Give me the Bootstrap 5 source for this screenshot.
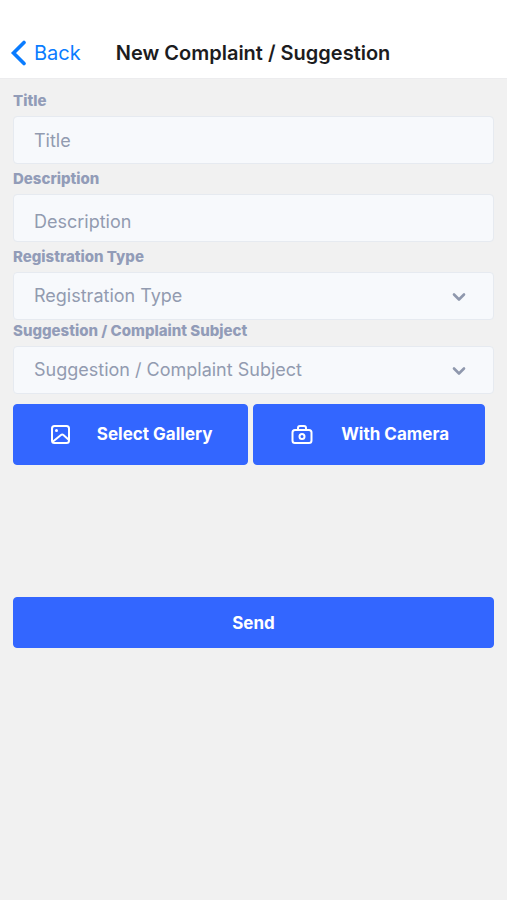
<!DOCTYPE html>
<html lang="en">
<head>
<meta charset="utf-8">
<meta name="viewport" content="width=device-width, initial-scale=1">
<title>New Complaint / Suggestion</title>
<link href="https://cdn.jsdelivr.net/npm/bootstrap@5.3.0/dist/css/bootstrap.min.css" rel="stylesheet">
<style>
  body { font-family: Inter, "Liberation Sans", sans-serif; background: #f1f1f1; color: #1c1c1e; }
  .top-bar { padding: 37px 10px 9px; border-bottom: 1px solid #ececee; gap: 35px; }
  .back-link { color: #0a7cff; font-size: 20px; line-height: 32px; gap: 8px; }
  .page-title { font-size: 20px; line-height: 32px; font-weight: 600; }
  .page-form { padding: 12px 13px; }
  .field-label { font-size: 15px; line-height: 20px; font-weight: 800; color: #929cb8; margin-bottom: 5px; }
  .field { margin-bottom: 5px; }
  .field-tight { margin-bottom: 1px; }
  .field-last { margin-bottom: 10px; }
  .field-box, .field-box:focus { height: 48px; padding: 0 20px; font-size: 18px; line-height: 24px; color: #929bb0; background-color: #f7f9fc; border: 1px solid #e6eaf0; border-radius: 4px; }
  .field-box::placeholder { color: #929bb0; opacity: 1; }
  textarea.field-box, textarea.field-box:focus { padding-top: 15px; resize: none; overflow: hidden; }
  select.field-box { background-image: none; }
  .chevron { right: 28px; top: 19px; pointer-events: none; }
  .action-btn { --bs-btn-color: #fff; --bs-btn-bg: #3366ff; --bs-btn-border-color: #3366ff; --bs-btn-hover-color: #fff; --bs-btn-hover-bg: #2858e6; --bs-btn-hover-border-color: #2858e6; --bs-btn-border-radius: 4px; --bs-btn-font-size: 17px; --bs-btn-font-weight: 700; --bs-btn-line-height: 24px; }
  .photo-row { gap: 5px; padding-right: 9px; margin-bottom: 132px; }
  .photo-btn { height: 61px; padding: 0 35px 2px; }
  .send-btn { height: 51px; }
</style>
</head>
<body>
<header class="top-bar bg-white d-flex align-items-center">
  <a href="#" class="back-link d-flex align-items-center text-decoration-none">
    <svg width="16" height="26" viewBox="0 0 16 26" fill="none" stroke="currentColor" stroke-width="3.600" stroke-linecap="round" stroke-linejoin="miter" aria-hidden="true"><path d="M14 2.500 3.500 13 14 23.500"/></svg>
    Back
  </a>
  <h1 class="page-title mb-0 text-nowrap">New Complaint / Suggestion</h1>
</header>
<main>
  <form class="page-form">
    <div class="field">
      <label class="field-label d-block" for="title">Title</label>
      <input type="text" class="form-control field-box shadow-none" id="title" placeholder="Title">
    </div>
    <div class="field">
      <label class="field-label d-block" for="description">Description</label>
      <textarea class="form-control field-box shadow-none d-block" id="description" rows="1" placeholder="Description"></textarea>
    </div>
    <div class="field-tight">
      <label class="field-label d-block" for="type">Registration Type</label>
      <div class="position-relative">
        <select class="form-select field-box shadow-none" id="type"><option>Registration Type</option></select>
        <svg class="chevron position-absolute" width="14" height="12" viewBox="0 0 14 12" fill="none" stroke="#8f98ad" stroke-width="2.600" stroke-linecap="round" stroke-linejoin="round" aria-hidden="true"><path d="m2 3.500 5 5 5-5"/></svg>
      </div>
    </div>
    <div class="field-last">
      <label class="field-label d-block" for="subject">Suggestion / Complaint Subject</label>
      <div class="position-relative">
        <select class="form-select field-box shadow-none" id="subject"><option>Suggestion / Complaint Subject</option></select>
        <svg class="chevron position-absolute" width="14" height="12" viewBox="0 0 14 12" fill="none" stroke="#8f98ad" stroke-width="2.600" stroke-linecap="round" stroke-linejoin="round" aria-hidden="true"><path d="m2 3.500 5 5 5-5"/></svg>
      </div>
    </div>
    <div class="photo-row d-flex">
      <button type="button" class="btn action-btn photo-btn flex-grow-1 d-flex align-items-center justify-content-between text-nowrap">
        <svg width="24" height="24" viewBox="0 0 24 24" fill="none" stroke="currentColor" stroke-width="2" stroke-linejoin="round" stroke-linecap="round" aria-hidden="true"><rect x="3" y="4" width="17" height="17" rx="2.500"/><circle cx="7.500" cy="8.500" r="1.500" fill="currentColor" stroke="none"/><path d="m4 19.500 8-6.500q1.200-1 2.400 0l5 4.500"/></svg>
        Select Gallery
      </button>
      <button type="button" class="btn action-btn photo-btn flex-grow-1 d-flex align-items-center justify-content-between text-nowrap">
        <svg width="28" height="24" viewBox="0 0 28 24" fill="none" stroke="currentColor" stroke-width="2" stroke-linejoin="round" stroke-linecap="round" aria-hidden="true"><rect x="3.500" y="8" width="19" height="13" rx="2.500"/><path d="M9 8V6a2 2 0 0 1 2-2h4a2 2 0 0 1 2 2v2"/><circle cx="13" cy="14.500" r="2.500"/></svg>
        With Camera
      </button>
    </div>
    <button type="submit" class="btn action-btn send-btn w-100">Send</button>
  </form>
</main>
<script src="https://cdn.jsdelivr.net/npm/bootstrap@5.3.0/dist/js/bootstrap.bundle.min.js"></script>
</body>
</html>
